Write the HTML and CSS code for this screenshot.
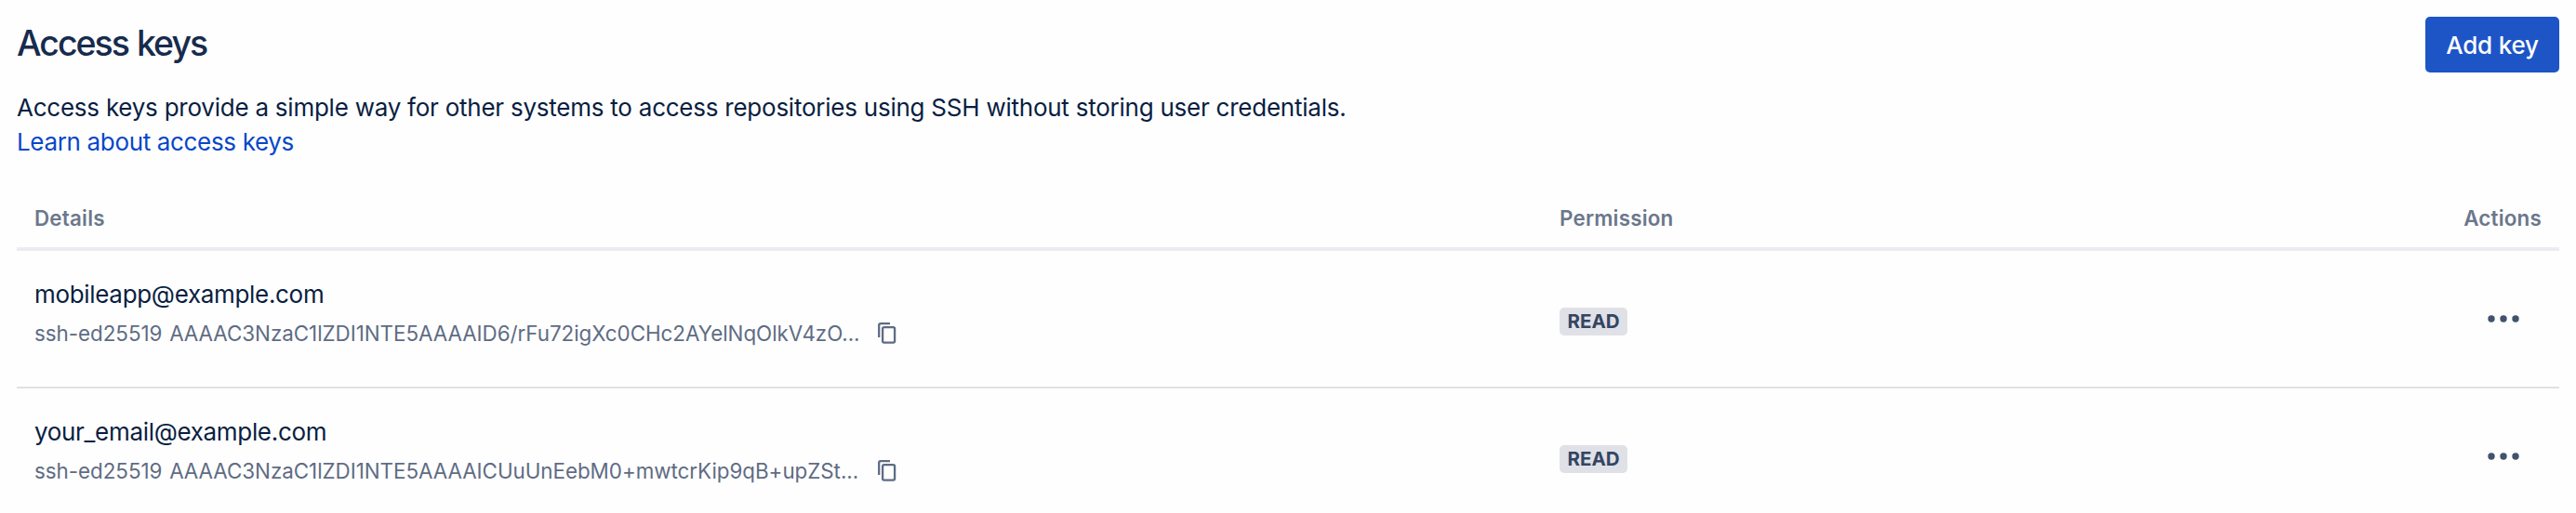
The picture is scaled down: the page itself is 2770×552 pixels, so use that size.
FILE: index.html
```html
<!DOCTYPE html>
<html lang="en">
<head>
    <meta charset="UTF-8">
    <meta name="viewport" content="width=device-width, initial-scale=1.0">
    <title>Access keys</title>
    <link rel="stylesheet" href="styles.css">
</head>
<body>
    <main class="container">
        <header class="page-header">
            <h1>Access keys</h1>
            <button class="btn-primary">Add key</button>
        </header>

        <div class="intro">
            <p>Access keys provide a simple way for other systems to access repositories using SSH without storing user credentials.</p>
            <a href="#">Learn about access keys</a>
        </div>

        <section class="keys">
            <div class="keys-head">
                <div class="col-details">Details</div>
                <div class="col-permission">Permission</div>
                <div class="col-actions">Actions</div>
            </div>

            <div class="key-row">
                <div class="col-details key-details">
                    <div class="key-name">mobileapp@example.com</div>
                    <div class="key-line">
                        <span class="key-value">ssh-ed25519 AAAAC3NzaC1lZDI1NTE5AAAAID6/rFu72igXc0CHc2AYelNqOlkV4zO...</span>
                        <svg class="copy-icon" viewBox="0 0 20 24"><path d="M1.2 16V3Q1.2 1.2 3 1.2H13"/><rect x="5.1" y="5.1" width="13" height="16.6" rx="1.6"/></svg>
                    </div>
                </div>
                <div class="col-permission"><span class="badge">READ</span></div>
                <div class="col-actions">
                    <svg class="more-icon" viewBox="0 0 36 10"><circle cx="5" cy="5" r="3.7"/><circle cx="18" cy="5" r="3.7"/><circle cx="31" cy="5" r="3.7"/></svg>
                </div>
            </div>

            <div class="key-row">
                <div class="col-details key-details">
                    <div class="key-name">your_email@example.com</div>
                    <div class="key-line">
                        <span class="key-value">ssh-ed25519 AAAAC3NzaC1lZDI1NTE5AAAAICUuUnEebM0+mwtcrKip9qB+upZSt...</span>
                        <svg class="copy-icon" viewBox="0 0 20 24"><path d="M1.2 16V3Q1.2 1.2 3 1.2H13"/><rect x="5.1" y="5.1" width="13" height="16.6" rx="1.6"/></svg>
                    </div>
                </div>
                <div class="col-permission"><span class="badge">READ</span></div>
                <div class="col-actions">
                    <svg class="more-icon" viewBox="0 0 36 10"><circle cx="5" cy="5" r="3.7"/><circle cx="18" cy="5" r="3.7"/><circle cx="31" cy="5" r="3.7"/></svg>
                </div>
            </div>
        </section>
    </main>
</body>
</html>
```
FILE: styles.css
```css
* {
    margin: 0;
    padding: 0;
    box-sizing: border-box;
}

body {
    font-family: Inter, "Liberation Sans", sans-serif;
    font-size: 26px;
    line-height: 37.4px;
    color: #091e42;
    background: #fefefe;
    overflow: hidden;
}

.container {
    padding: 18px 18px 0;
}

.page-header {
    display: flex;
    justify-content: space-between;
    align-items: center;
    height: 60px;
}

h1 {
    font-size: 37.5px;
    font-weight: 500;
    line-height: 44px;
    letter-spacing: -2px;
    word-spacing: 1px;
    color: #172b4d;
    padding-bottom: 2px;
}

.btn-primary {
    width: 144px;
    height: 60px;
    border: none;
    border-radius: 5px;
    background: #1d55c7;
    color: #fff;
    font-family: inherit;
    font-size: 26px;
    font-weight: 500;
    letter-spacing: -0.2px;
    cursor: pointer;
}

.intro {
    margin-top: 19px;
    height: 75px;
}

.intro p {
    letter-spacing: -0.24px;
    white-space: nowrap;
}

.intro a {
    display: block;
    color: #0747c9;
    letter-spacing: -0.34px;
    text-decoration: none;
}

.keys-head {
    display: flex;
    align-items: center;
    height: 98px;
    padding: 31px 19px 0;
    border-bottom: 4px solid #ebecf0;
    font-size: 22.4px;
    font-weight: 600;
    letter-spacing: 0.2px;
    color: #6b778c;
}

.key-row {
    display: flex;
    align-items: center;
    height: 148px;
    padding: 0 19px;
    border-bottom: 2px solid #dfe1e6;
}

.col-details {
    width: 1640px;
}

.col-permission {
    flex: 1;
}

.col-actions {
    display: flex;
    justify-content: flex-end;
}

.key-details {
    padding-bottom: 11px;
}

.key-name {
    letter-spacing: -0.32px;
    white-space: nowrap;
}

.key-line {
    display: flex;
    align-items: center;
    height: 37px;
    margin-top: 5px;
    font-size: 22.4px;
    color: #5e6c84;
}

.key-value {
    width: 907px;
    letter-spacing: -0.04px;
    word-spacing: 1.5px;
    white-space: nowrap;
}

.copy-icon {
    width: 20px;
    height: 24px;
    fill: none;
    stroke: #5e6c84;
    stroke-width: 2.3;
}

.badge {
    display: block;
    width: 73px;
    height: 30px;
    margin-top: 6px;
    border-radius: 5px;
    background: #dfe1e6;
    color: #344563;
    font-size: 20.5px;
    font-weight: 700;
    line-height: 29px;
    text-align: center;
}

.more-icon {
    width: 36px;
    height: 10px;
    margin-right: 23px;
    fill: #42526e;
}
```
